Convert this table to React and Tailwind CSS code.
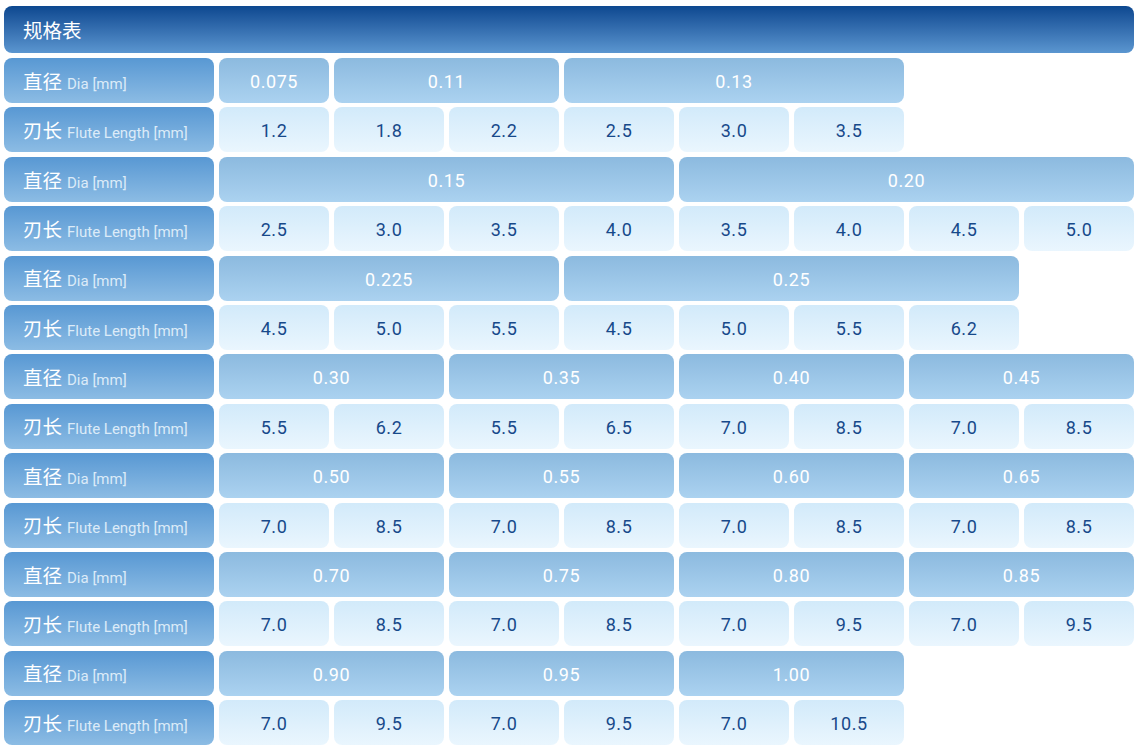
import React from "react";

// 规格表：每组一行直径 + 一行刃长
const groups = [
  {
    dia: [["0.075", 1], ["0.11", 2], ["0.13", 3]],
    len: ["1.2", "1.8", "2.2", "2.5", "3.0", "3.5"],
  },
  {
    dia: [["0.15", 4], ["0.20", 4]],
    len: ["2.5", "3.0", "3.5", "4.0", "3.5", "4.0", "4.5", "5.0"],
  },
  {
    dia: [["0.225", 3], ["0.25", 4]],
    len: ["4.5", "5.0", "5.5", "4.5", "5.0", "5.5", "6.2"],
  },
  {
    dia: [["0.30", 2], ["0.35", 2], ["0.40", 2], ["0.45", 2]],
    len: ["5.5", "6.2", "5.5", "6.5", "7.0", "8.5", "7.0", "8.5"],
  },
  {
    dia: [["0.50", 2], ["0.55", 2], ["0.60", 2], ["0.65", 2]],
    len: ["7.0", "8.5", "7.0", "8.5", "7.0", "8.5", "7.0", "8.5"],
  },
  {
    dia: [["0.70", 2], ["0.75", 2], ["0.80", 2], ["0.85", 2]],
    len: ["7.0", "8.5", "7.0", "8.5", "7.0", "9.5", "7.0", "9.5"],
  },
  {
    dia: [["0.90", 2], ["0.95", 2], ["1.00", 2]],
    len: ["7.0", "9.5", "7.0", "9.5", "7.0", "10.5"],
  },
];

const spanClass = {
  1: "col-span-1",
  2: "col-span-2",
  3: "col-span-3",
  4: "col-span-4",
};

const cjk = "font-['Noto_Sans_CJK_SC',sans-serif]";
const num = "font-['Roboto','Noto_Sans',sans-serif]";

function Label({ zh, en }) {
  return (
    <div className="flex items-center h-[45px] pl-[19px] rounded-lg bg-gradient-to-b from-[#5898d3] to-[#8cbce4]">
      <div className="flex items-baseline">
        <span className={`${cjk} text-[19.5px] text-white`}>{zh}</span>
        <span className={`${num} text-[15px] text-[#dcebf8] ml-[5px]`}>{en}</span>
      </div>
    </div>
  );
}

export default function App() {
  return (
    <div className="w-[1144px] h-[755px] bg-white pt-[6px] pl-[4px]">
      <div className="w-[1130px] h-[47px] rounded-lg bg-gradient-to-b from-[#0c4890] to-[#5b96d0] flex items-center pl-[19px]">
        <span className={`${cjk} text-[19.5px] text-white`}>规格表</span>
      </div>

      <div className="mt-[5px] grid grid-cols-[210px_repeat(8,110px)] gap-x-[5px] gap-y-[4.4px]">
        {groups.map((g, gi) => (
          <React.Fragment key={gi}>
            <Label zh="直径" en="Dia [mm]" />
            {g.dia.map(([v, s], i) => (
              <div
                key={"d" + i}
                className={`${spanClass[s]} h-[45px] rounded-lg bg-gradient-to-b from-[#8cbadf] to-[#abd2f0] flex items-center justify-center pt-[2px]`}
              >
                <span className={`${num} text-[18px] text-white tracking-[0.03em]`}>{v}</span>
              </div>
            ))}
            {Array.from({ length: 8 - g.dia.reduce((a, d) => a + d[1], 0) }).map((_, i) => (
              <div key={"de" + i} />
            ))}

            <Label zh="刃长" en="Flute Length [mm]" />
            {g.len.map((v, i) => (
              <div
                key={"l" + i}
                className="h-[45px] rounded-lg bg-gradient-to-b from-[#d2eafa] to-[#eaf6fe] flex items-center justify-center pt-[2px]"
              >
                <span className={`${num} text-[18px] text-[#17498a] tracking-[0.03em]`}>{v}</span>
              </div>
            ))}
            {Array.from({ length: 8 - g.len.length }).map((_, i) => (
              <div key={"le" + i} />
            ))}
          </React.Fragment>
        ))}
      </div>
    </div>
  );
}
